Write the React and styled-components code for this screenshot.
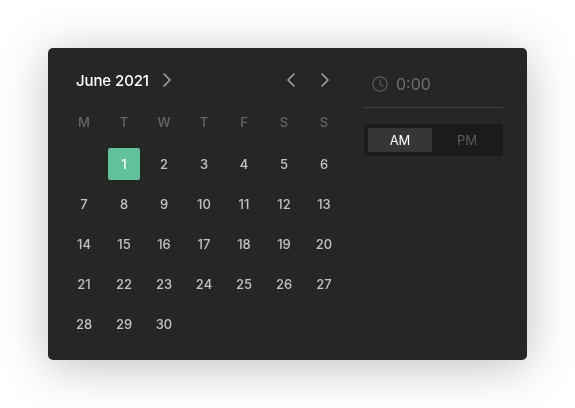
import React from "react";
import styled, { createGlobalStyle } from "styled-components";
import { ChevronLeft, ChevronRight } from "lucide-react";

const GlobalStyle = createGlobalStyle`
  html, body {
    margin: 0;
    height: 100%;
    background: #fff;
  }
  body {
    font-family: "Inter", "Liberation Sans", sans-serif;
  }
`;

const Page = styled.div`
  width: 575px;
  height: 408px;
  padding: 48px;
  box-sizing: border-box;
  overflow: hidden;
`;

const Panel = styled.div`
  width: 479px;
  height: 312px;
  box-sizing: border-box;
  display: flex;
  padding: 12px 24px 0 16px;
  gap: 20px;
  background: #262626;
  border-radius: 5px;
  box-shadow: 0 6px 48px rgba(0, 0, 0, 0.26);
  will-change: transform;
`;

const Calendar = styled.div`
  width: 280px;
`;

const Header = styled.div`
  height: 40px;
  display: flex;
  align-items: center;
  padding: 0 0 0 12px;
`;

const Title = styled.span`
  font-size: 15px;
  font-weight: 500;
  letter-spacing: -0.1px;
  color: #fff;
`;

const HeaderIcon = styled.button`
  width: 28px;
  height: 28px;
  padding: 0;
  border: 0;
  background: none;
  display: flex;
  align-items: center;
  justify-content: center;
  color: #a3a3a3;
  margin-left: ${(p) => p.$gap || 0}px;
`;

const Week = styled.div`
  display: grid;
  grid-template-columns: repeat(7, 40px);
  height: 44px;
  align-items: center;
`;

const WeekDay = styled.span`
  text-align: center;
  font-size: 13px;
  font-weight: 500;
  color: #666;
`;

const Days = styled.div`
  display: grid;
  grid-template-columns: repeat(7, 40px);
  grid-auto-rows: 40px;
`;

const Day = styled.div`
  display: flex;
  align-items: center;
  justify-content: center;
  font-size: 13px;
  font-weight: 500;
  color: ${(p) => (p.$selected ? "#fff" : "#c2c2c2")};
  grid-column-start: ${(p) => p.$start || "auto"};

  span {
    width: 32px;
    height: 32px;
    display: flex;
    align-items: center;
    justify-content: center;
    border-radius: 2px;
    background: ${(p) => (p.$selected ? "#62c29c" : "transparent")};
  }
`;

const Side = styled.div`
  width: 139px;
  padding-top: 8px;
`;

const TimeRow = styled.div`
  height: 40px;
  box-sizing: border-box;
  padding: 0 0 7px 8px;
  display: flex;
  align-items: center;
  gap: 8px;
  border-bottom: 1px solid #414141;
`;

const TimeText = styled.span`
  font-size: 16px;
  color: #6e6e6e;
`;

const Meridiem = styled.div`
  margin-top: 16px;
  height: 32px;
  box-sizing: border-box;
  padding: 4px;
  display: flex;
  gap: 3px;
  background: #1b1b1b;
  border-radius: 2px;
`;

const MeridiemOption = styled.div`
  width: 64px;
  display: flex;
  align-items: center;
  justify-content: center;
  font-size: 13px;
  border-radius: 2px;
  color: ${(p) => (p.$active ? "#fff" : "#5c5c5c")};
  background: ${(p) => (p.$active ? "#363636" : "transparent")};
`;

const ClockIcon = () => (
  <svg width="16" height="16" viewBox="0 0 16 16" fill="none" stroke="#5c5c5c" strokeWidth="1.2" strokeLinecap="round" strokeLinejoin="round">
    <circle cx="8" cy="8" r="7.2" />
    <path d="M8 4v4.4l3 1.6" />
  </svg>
);

const weekDays = ["M", "T", "W", "T", "F", "S", "S"];
const days = Array.from({ length: 30 }, (_, i) => i + 1);

const App = () => {
  return (
    <Page>
      <GlobalStyle />
      <Panel>
        <Calendar>
          <Header>
            <Title>June 2021</Title>
            <HeaderIcon $gap={4}>
              <ChevronRight size={24} strokeWidth={1.6} />
            </HeaderIcon>
            <HeaderIcon $gap={96}>
              <ChevronLeft size={24} strokeWidth={1.6} />
            </HeaderIcon>
            <HeaderIcon $gap={6}>
              <ChevronRight size={24} strokeWidth={1.6} />
            </HeaderIcon>
          </Header>
          <Week>
            {weekDays.map((d, i) => (
              <WeekDay key={i}>{d}</WeekDay>
            ))}
          </Week>
          <Days>
            {days.map((d) => (
              <Day key={d} $selected={d === 1} $start={d === 1 ? 2 : undefined}>
                <span>{d}</span>
              </Day>
            ))}
          </Days>
        </Calendar>
        <Side>
          <TimeRow>
            <ClockIcon />
            <TimeText>0:00</TimeText>
          </TimeRow>
          <Meridiem>
            <MeridiemOption $active>AM</MeridiemOption>
            <MeridiemOption>PM</MeridiemOption>
          </Meridiem>
        </Side>
      </Panel>
    </Page>
  );
};

export default App;
